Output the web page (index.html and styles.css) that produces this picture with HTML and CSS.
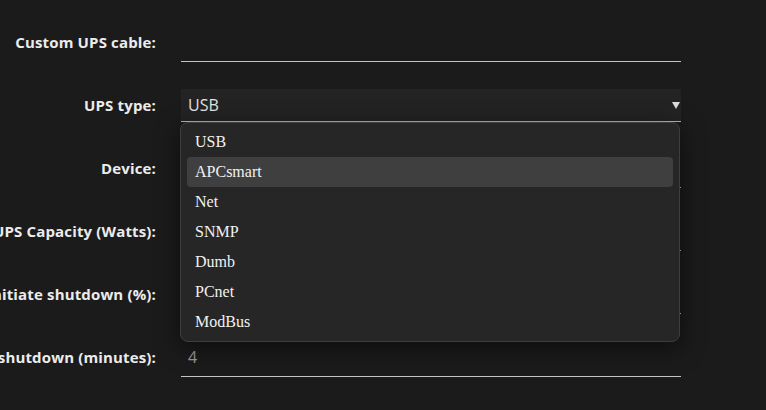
FILE: index.html
```html
<!DOCTYPE html>
<html lang="en">
<head>
<meta charset="utf-8">
<title>UPS Settings</title>
<link rel="stylesheet" href="styles.css">
</head>
<body>
<form class="settings">
  <div class="row">
    <div class="label"><span>Custom UPS cable:</span></div>
    <div class="field"><div class="text-input"></div></div>
  </div>
  <div class="row">
    <div class="label"><span>UPS type:</span></div>
    <div class="field">
      <div class="select">
        <span class="select-value">USB</span>
        <span class="caret"></span>
      </div>
      <ul class="menu">
        <li>USB</li>
        <li class="active">APCsmart</li>
        <li>Net</li>
        <li>SNMP</li>
        <li>Dumb</li>
        <li>PCnet</li>
        <li>ModBus</li>
      </ul>
    </div>
  </div>
  <div class="row">
    <div class="label"><span>Device:</span></div>
    <div class="field"><div class="text-input"></div></div>
  </div>
  <div class="row">
    <div class="label"><span>UPS Capacity (Watts):</span></div>
    <div class="field"><div class="text-input"></div></div>
  </div>
  <div class="row">
    <div class="label"><span>Battery level to initiate shutdown (%):</span></div>
    <div class="field"><div class="text-input"></div></div>
  </div>
  <div class="row">
    <div class="label"><span>Runtime left to initiate shutdown (minutes):</span></div>
    <div class="field"><div class="text-input">4</div></div>
  </div>
</form>
</body>
</html>
```
FILE: styles.css
```css
html, body {
  margin: 0;
  background: #1c1b1c;
  overflow: hidden;
}

.settings {
  padding-top: 11px;
  font-family: "Open Sans", "Liberation Sans", sans-serif;
}

.row {
  display: flex;
  align-items: center;
  height: 63px;
  gap: 25px;
}

.label {
  width: 156px;
  flex: none;
  display: flex;
  justify-content: flex-end;
  padding-bottom: 2px;
  color: #ececec;
  font-size: 15px;
  font-weight: 700;
  letter-spacing: 0.15px;
  white-space: nowrap;
}

.field {
  position: relative;
  width: 500px;
  flex: none;
}

.text-input {
  box-sizing: border-box;
  height: 39px;
  border-bottom: 1px solid #c4c4c4;
  padding-left: 7px;
  display: flex;
  align-items: center;
  color: #9c9c9c;
  font-size: 16px;
}

.select {
  box-sizing: border-box;
  height: 33px;
  background: #232323;
  border-bottom: 1px solid #b8b8b8;
  padding: 0 1px 0 7px;
  display: flex;
  align-items: center;
  justify-content: space-between;
  color: #e4e4e4;
  font-size: 16px;
}

.caret {
  width: 0;
  height: 0;
  border-left: 4px solid transparent;
  border-right: 4px solid transparent;
  border-top: 7px solid #dcdcdc;
  margin-top: 1px;
}

/* open option list of the type select */
.menu {
  position: absolute;
  left: -1px;
  top: 33px;
  width: 500px;
  box-sizing: border-box;
  margin: 0;
  padding: 4px 6px 4px;
  list-style: none;
  background: #262626;
  border: 1px solid #3e3e3e;
  border-radius: 8px;
  box-shadow: 0 6px 24px rgba(0, 0, 0, 0.55);
  font-family: "Liberation Serif", "Times New Roman", serif;
  font-size: 16px;
  color: #f2f2f2;
  z-index: 2;
}

.menu li {
  height: 30px;
  line-height: 30px;
  padding-left: 8px;
  border-radius: 4px;
}

.menu li.active {
  background: #3f3f3f;
}
```
